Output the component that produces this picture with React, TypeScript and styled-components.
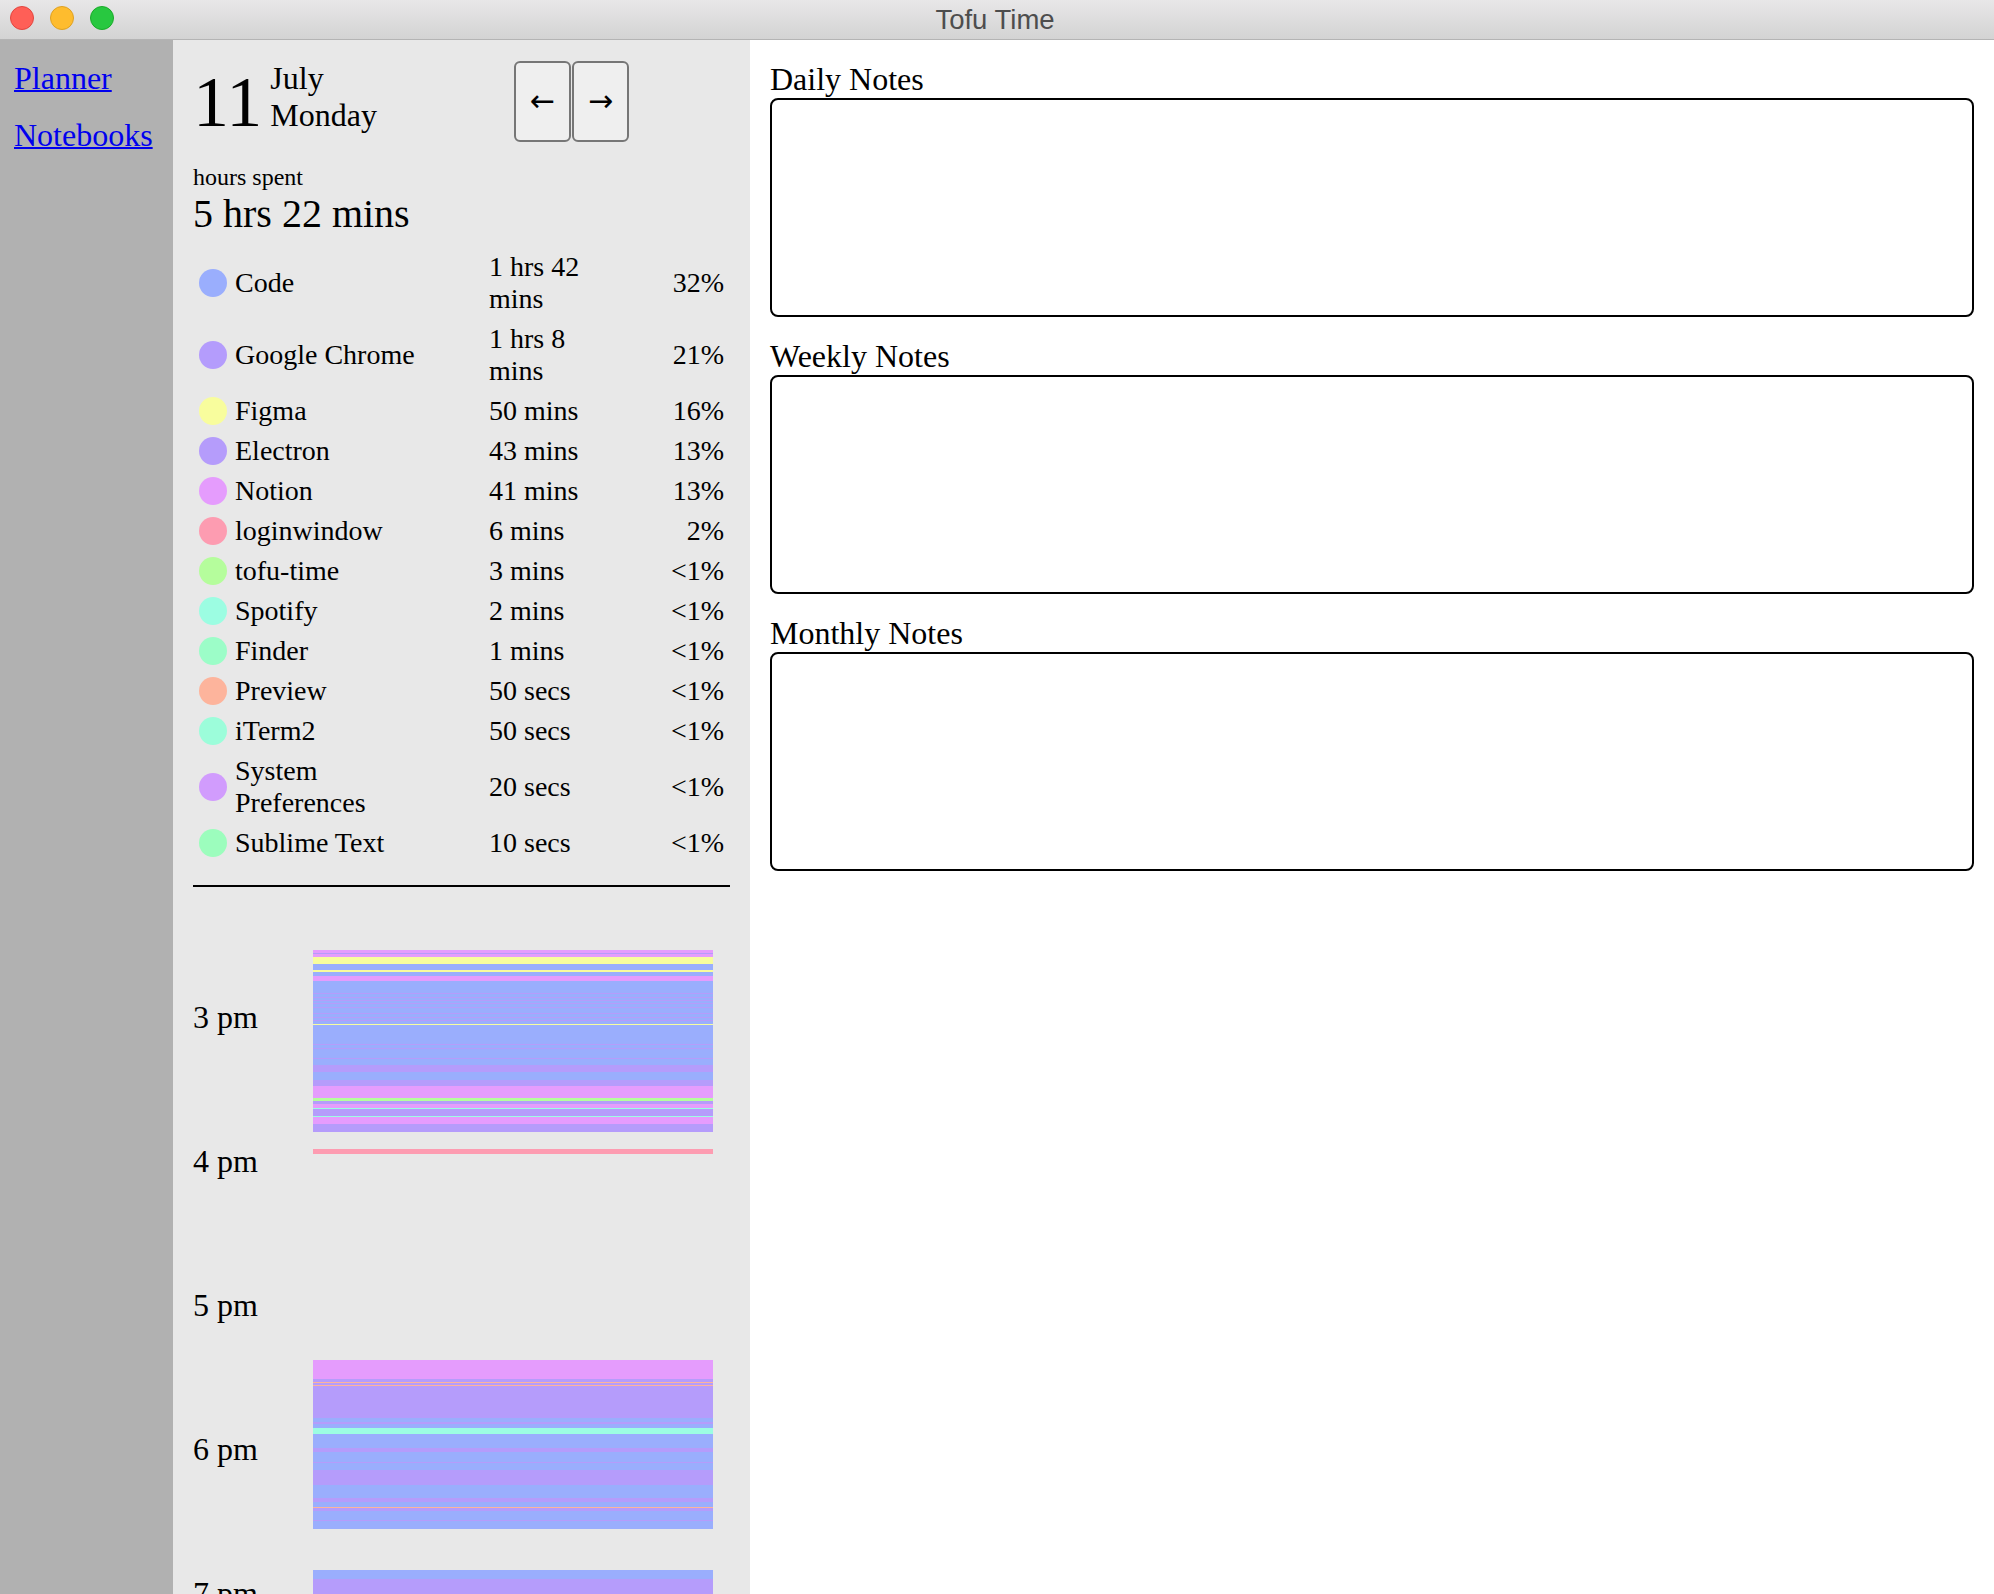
import React from 'react';
import styled, { createGlobalStyle } from 'styled-components';

const GlobalStyle = createGlobalStyle`
  html, body { margin: 0; padding: 0; height: 100%; overflow: hidden; }
  body {
    font-family: "Liberation Serif", "Times New Roman", serif;
    color: #000;
    background: #fff;
  }
  #root { height: 100%; }
`;

const COLORS: Record<string, string> = {
  code: '#9aaefd',
  chrome: '#b49cfc',
  figma: '#f8fd9d',
  electron: '#b59cfb',
  notion: '#e59cfd',
  loginwindow: '#fd9cb1',
  tofu: '#b5fd9c',
  spotify: '#9cfde2',
  finder: '#9cfdc8',
  preview: '#fdb49c',
  iterm: '#9cfdda',
  sysprefs: '#d19cfd',
  sublime: '#9cfdbd',
};

type AppUsage = { name: string; key: string; time: string; pct: string };

const APPS: AppUsage[] = [
  { name: 'Code', key: 'code', time: '1 hrs 42 mins', pct: '32%' },
  { name: 'Google Chrome', key: 'chrome', time: '1 hrs 8 mins', pct: '21%' },
  { name: 'Figma', key: 'figma', time: '50 mins', pct: '16%' },
  { name: 'Electron', key: 'electron', time: '43 mins', pct: '13%' },
  { name: 'Notion', key: 'notion', time: '41 mins', pct: '13%' },
  { name: 'loginwindow', key: 'loginwindow', time: '6 mins', pct: '2%' },
  { name: 'tofu-time', key: 'tofu', time: '3 mins', pct: '<1%' },
  { name: 'Spotify', key: 'spotify', time: '2 mins', pct: '<1%' },
  { name: 'Finder', key: 'finder', time: '1 mins', pct: '<1%' },
  { name: 'Preview', key: 'preview', time: '50 secs', pct: '<1%' },
  { name: 'iTerm2', key: 'iterm', time: '50 secs', pct: '<1%' },
  { name: 'System Preferences', key: 'sysprefs', time: '20 secs', pct: '<1%' },
  { name: 'Sublime Text', key: 'sublime', time: '10 secs', pct: '<1%' },
];

// [start, end, app] offsets in px from the top of the timeline (2.4px per minute)
const SEGMENTS: [number, number, string][] = [
  [5, 7.7, 'notion'],
  [7.7, 8.7, 'electron'],
  [8.7, 12.3, 'notion'],
  [12.3, 19, 'figma'],
  [19, 21, 'code'],
  [21, 25, 'code'],
  [25, 26.7, 'figma'],
  [26.7, 31, 'code'],
  [31, 36, 'notion'],
  [36, 79, 'code'],
  [48, 49, 'electron'],
  [51.7, 52.7, 'electron'],
  [55, 56, 'electron'],
  [58.3, 59.3, 'electron'],
  [61.7, 62.7, 'electron'],
  [67.7, 68.7, 'electron'],
  [71.7, 72.7, 'electron'],
  [75, 76, 'electron'],
  [79, 80, 'figma'],
  [80, 120, 'code'],
  [99.3, 100.3, 'electron'],
  [103.3, 104.3, 'electron'],
  [113.3, 114.3, 'electron'],
  [120, 126.7, 'electron'],
  [126.7, 135, 'code'],
  [135, 140.7, 'electron'],
  [140.7, 153.3, 'notion'],
  [153.3, 156, 'tofu'],
  [156, 159, 'electron'],
  [159, 162.7, 'notion'],
  [162.7, 164.3, 'spotify'],
  [164.3, 171, 'electron'],
  [171, 172, 'spotify'],
  [172, 179, 'notion'],
  [179, 186.7, 'electron'],
  [204, 209, 'loginwindow'],
  [415, 434, 'notion'],
  [434, 436.7, 'electron'],
  [436.7, 437.7, 'preview'],
  [437.7, 440, 'electron'],
  [440, 441, 'preview'],
  [441, 473.3, 'electron'],
  [473.3, 476.7, 'code'],
  [476.7, 479, 'electron'],
  [479, 483, 'code'],
  [483, 489, 'spotify'],
  [489, 503.3, 'code'],
  [503.3, 506.7, 'electron'],
  [506.7, 516.7, 'code'],
  [516.7, 518.3, 'electron'],
  [518.3, 525, 'code'],
  [525, 540, 'electron'],
  [540, 553.3, 'code'],
  [553.3, 556.7, 'electron'],
  [556.7, 561.7, 'code'],
  [561.7, 562.7, 'preview'],
  [562.7, 565.7, 'electron'],
  [565.7, 575, 'code'],
  [575, 576, 'electron'],
  [576, 584, 'code'],
  [625, 634.3, 'code'],
  [634.3, 700, 'electron'],
  [700, 760, 'code'],
];

const HOURS = ['3 pm', '4 pm', '5 pm', '6 pm', '7 pm', '8 pm', '9 pm', '10 pm'];

const Window = styled.div`
  display: flex;
  flex-direction: column;
  height: 100vh;
`;

const TitleBar = styled.header`
  flex: 0 0 39px;
  display: grid;
  grid-template-columns: 1fr auto 1fr;
  align-items: center;
  border-bottom: 1px solid #b4b4b4;
  background: linear-gradient(#e8e7e8, #d3d3d3);
`;

const Lights = styled.div`
  display: flex;
  gap: 16px;
  padding-left: 10px;
  margin-top: -3px;
`;

const Light = styled.span<{ $fill: string; $edge: string }>`
  width: 22px;
  height: 22px;
  border-radius: 50%;
  background: ${(p) => p.$fill};
  border: 1px solid ${(p) => p.$edge};
`;

const Title = styled.div`
  font-family: "Liberation Sans", Arial, sans-serif;
  font-size: 27.5px;
  line-height: 37px;
  color: #4d4d4d;
  margin-right: 4px;
`;

const Main = styled.div`
  flex: 1;
  display: flex;
  min-height: 0;
`;

const Sidebar = styled.nav`
  flex: 0 0 173px;
  box-sizing: border-box;
  background: #b1b1b1;
  padding: 20px 14px;
`;

const NavLink = styled.a`
  display: block;
  font-size: 32px;
  line-height: 37px;
  color: #0000ee;
  text-decoration: underline;
  text-decoration-thickness: 2px;
  margin-bottom: 20px;
`;

const DayPanel = styled.section`
  flex: 0 0 577px;
  box-sizing: border-box;
  background: #e8e8e8;
  padding: 20px;
  overflow: hidden;
`;

const Header = styled.div`
  display: flex;
  align-items: center;
  height: 82px;
`;

const DateGroup = styled.div`
  flex: 0 0 321px;
  display: flex;
  align-items: last baseline;
`;

const DayNumber = styled.div`
  font-size: 72px;
  line-height: 82px;
`;

const DateLines = styled.div`
  margin-left: 8px;
  font-size: 32px;
  line-height: 37px;
`;

const NavGroup = styled.div`
  display: flex;
  gap: 1px;
`;

const NavButton = styled.button`
  width: 57px;
  height: 81px;
  padding: 0;
  box-sizing: border-box;
  border: 2px solid #767676;
  border-radius: 6px;
  background: #efefef;
  color: #000;
  font-family: "DejaVu Sans", sans-serif;
  font-size: 30px;
  line-height: 1;
`;

const Summary = styled.div`
  margin-top: 20px;
`;

const HoursLabel = styled.div`
  font-size: 24px;
  line-height: 30px;
`;

const HoursTotal = styled.div`
  font-size: 40px;
  line-height: 43px;
`;

const AppList = styled.div`
  margin-top: 10px;
  padding: 4px;
  display: flex;
  flex-direction: column;
  gap: 4px;
`;

const AppRow = styled.div`
  display: grid;
  grid-template-columns: 28px 246px 120px 1fr;
  column-gap: 8px;
  align-items: center;
  padding: 2px;
  font-size: 28px;
  line-height: 32px;
`;

const Dot = styled.span<{ $color: string }>`
  width: 28px;
  height: 28px;
  border-radius: 50%;
  background: ${(p) => p.$color};
`;

const AppName = styled.span`
  max-width: 200px;
`;

const Percent = styled.span`
  text-align: right;
`;

const Divider = styled.hr`
  margin: 20px 0 0;
  height: 0;
  border: 0;
  border-top: 2px solid #000;
`;

const Timeline = styled.div`
  position: relative;
  margin-top: 58px;
`;

const HourRow = styled.div`
  height: 144px;
  display: flex;
  align-items: center;
  font-size: 32px;
  line-height: 37px;
`;

const BarsLayer = styled.div`
  position: absolute;
  top: 0;
  left: 120px;
  width: 400px;
  height: 100%;
`;

const Segment = styled.div<{ $color: string }>`
  position: absolute;
  left: 0;
  right: 0;
  background: ${(p) => p.$color};
`;

const NotesPanel = styled.section`
  flex: 1;
  box-sizing: border-box;
  padding: 20px;
  display: flex;
  flex-direction: column;
  gap: 20px;
`;

const NoteSection = styled.div`
  display: flex;
  flex-direction: column;
`;

const NoteLabel = styled.label`
  font-size: 32px;
  line-height: 38px;
`;

const NoteBox = styled.textarea`
  display: block;
  width: 100%;
  height: 219px;
  box-sizing: border-box;
  margin: 0;
  padding: 8px;
  border: 2px solid #000;
  border-radius: 8px;
  background: #fff;
  resize: none;
  font-family: "Liberation Serif", serif;
  font-size: 28px;
  outline: none;
`;

export default function App() {
  return (
    <>
      <GlobalStyle />
      <Window>
        <TitleBar>
          <Lights>
            <Light $fill="#ff5f57" $edge="#e2463f" />
            <Light $fill="#febc2e" $edge="#dea123" />
            <Light $fill="#28c840" $edge="#1aab29" />
          </Lights>
          <Title>Tofu Time</Title>
          <div />
        </TitleBar>
        <Main>
          <Sidebar>
            <NavLink href="#planner">Planner</NavLink>
            <NavLink href="#notebooks">Notebooks</NavLink>
          </Sidebar>
          <DayPanel>
            <Header>
              <DateGroup>
                <DayNumber>11</DayNumber>
                <DateLines>
                  <div>July</div>
                  <div>Monday</div>
                </DateLines>
              </DateGroup>
              <NavGroup>
                <NavButton>←</NavButton>
                <NavButton>→</NavButton>
              </NavGroup>
            </Header>
            <Summary>
              <HoursLabel>hours spent</HoursLabel>
              <HoursTotal>5 hrs 22 mins</HoursTotal>
            </Summary>
            <AppList>
              {APPS.map((a) => (
                <AppRow key={a.name}>
                  <Dot $color={COLORS[a.key]} />
                  <AppName>{a.name}</AppName>
                  <span>{a.time}</span>
                  <Percent>{a.pct}</Percent>
                </AppRow>
              ))}
            </AppList>
            <Divider />
            <Timeline>
              {HOURS.map((h) => (
                <HourRow key={h}>{h}</HourRow>
              ))}
              <BarsLayer>
                {SEGMENTS.map(([s, e, k], i) => (
                  <Segment key={i} $color={COLORS[k]} style={{ top: s, height: e - s }} />
                ))}
              </BarsLayer>
            </Timeline>
          </DayPanel>
          <NotesPanel>
            <NoteSection>
              <NoteLabel>Daily Notes</NoteLabel>
              <NoteBox />
            </NoteSection>
            <NoteSection>
              <NoteLabel>Weekly Notes</NoteLabel>
              <NoteBox />
            </NoteSection>
            <NoteSection>
              <NoteLabel>Monthly Notes</NoteLabel>
              <NoteBox />
            </NoteSection>
          </NotesPanel>
        </Main>
      </Window>
    </>
  );
}
